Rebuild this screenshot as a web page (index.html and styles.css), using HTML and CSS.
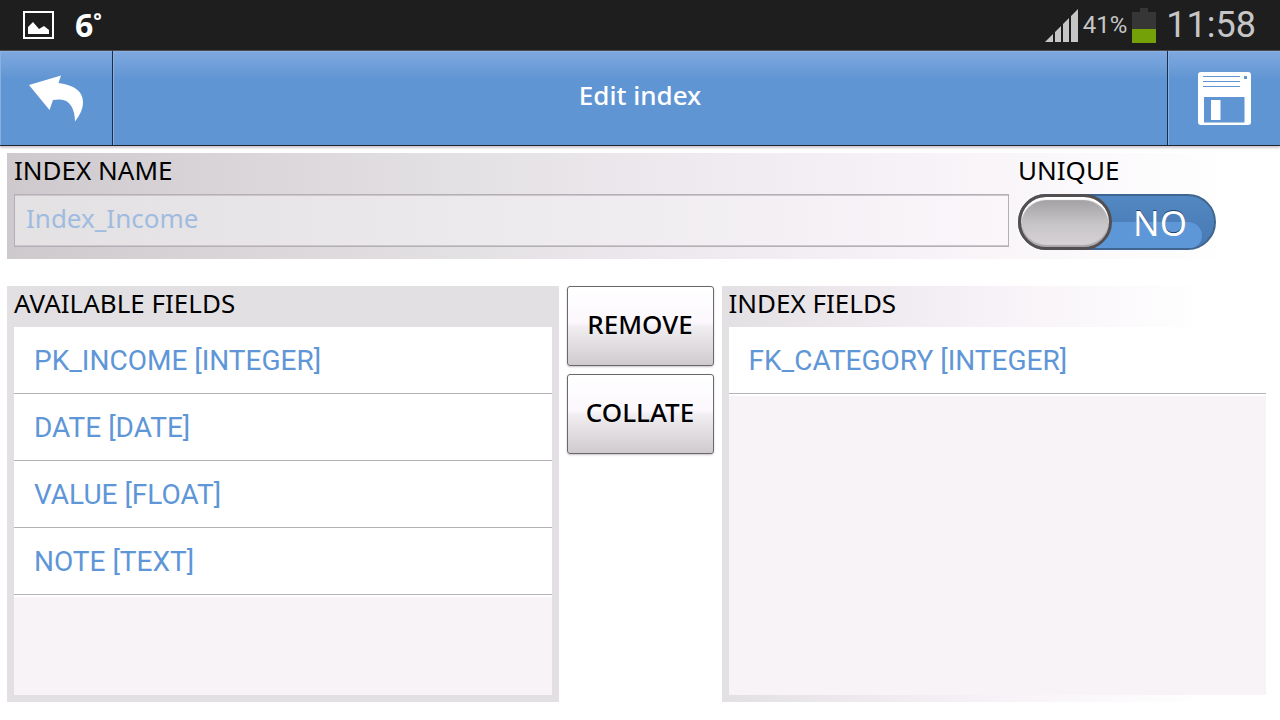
FILE: index.html
```html
<!DOCTYPE html>
<html lang="en">
<head>
<meta charset="utf-8">
<meta name="viewport" content="width=device-width, initial-scale=1">
<title>Edit index</title>
<link rel="stylesheet" href="styles.css">
</head>
<body>
<div class="status-bar">
  <div class="status-group">
    <svg class="picture-icon" width="32" height="29" viewBox="0 0 32 29" aria-hidden="true">
      <rect x="1" y="1" width="29" height="26" fill="none" stroke="#fff" stroke-width="2"/>
      <path fill="#fff" d="M5 23V16L10 11l6 7 5-3 5 4v4z"/>
    </svg>
    <span class="temperature">6<span class="degree">°</span></span>
  </div>
  <div class="status-group status-right">
    <svg width="33" height="33" viewBox="0 0 33 33" fill="#c6c6c6" aria-hidden="true">
      <path d="M0 33L8 25v8zM10 33V23l6-6v16zM18 33V15l6-6v24zM26 33V7l7-7v33z"/>
    </svg>
    <span class="percent">41%</span>
    <svg width="24" height="35" viewBox="0 0 24 35" aria-hidden="true">
      <path fill="#363636" d="M8 0h8v4h8v17H0V4h8z"/>
      <path fill="#74a008" d="M0 21h24v14H0z"/>
    </svg>
    <time class="clock">11:58</time>
  </div>
</div>
<header class="toolbar">
  <button class="tool-button" type="button" aria-label="Back">
    <svg width="55" height="47" viewBox="0 0 55 47" aria-hidden="true">
      <path fill="#fff" d="M0 10L32 0.500 29.500 8C46 10 54 17 54 27c0 7-3 13-8 19.500C46 33 40 24 30 24.500l-6 .5-3.500 10z"/>
    </svg>
  </button>
  <h1 class="title">Edit index</h1>
  <button class="tool-button" type="button" aria-label="Save">
    <svg width="53" height="53" viewBox="0 0 53 53" aria-hidden="true">
      <rect width="53" height="53" rx="3" fill="#fff"/>
      <path stroke="#6095d3" d="M5 4.500h37M5 9.500h37M5 14.500h37"/>
      <path fill="#6095d3" d="M46 4h3v3h-3zM6 25h40.500v25.500H6z"/>
      <path fill="#fff" d="M13 28h9.500v20H13z"/>
    </svg>
  </button>
</header>
<main class="content">
  <section class="panel name-panel">
    <div class="name-field">
      <label class="caption" for="index-name">INDEX NAME</label>
      <input class="text-input" id="index-name" type="text" placeholder="Index_Income">
    </div>
    <div class="unique-field">
      <label class="caption" for="unique">UNIQUE</label>
      <label class="toggle">
        <input class="toggle-input" id="unique" type="checkbox">
        <span class="toggle-knob"></span>
        <span class="toggle-text">NO</span>
      </label>
    </div>
  </section>
  <div class="columns">
    <section class="panel available-panel">
      <h2 class="caption">AVAILABLE FIELDS</h2>
      <ul class="list">
        <li class="list-item">PK_INCOME [INTEGER]</li>
        <li class="list-item">DATE [DATE]</li>
        <li class="list-item">VALUE [FLOAT]</li>
        <li class="list-item">NOTE [TEXT]</li>
      </ul>
    </section>
    <div class="actions">
      <button class="action" type="button">REMOVE</button>
      <button class="action" type="button">COLLATE</button>
    </div>
    <section class="panel index-panel">
      <h2 class="caption">INDEX FIELDS</h2>
      <ul class="list">
        <li class="list-item">FK_CATEGORY [INTEGER]</li>
      </ul>
    </section>
  </div>
</main>
</body>
</html>
```

FILE: styles.css
```css
* {
  box-sizing: border-box;
}

body {
  display: flex;
  flex-direction: column;
  min-height: 100vh;
  margin: 0;
  background: #fff;
  color: #000;
  font-family: "Noto Sans", sans-serif;
}

button {
  padding: 0;
  font: inherit;
  cursor: pointer;
}

.status-bar {
  display: flex;
  justify-content: space-between;
  height: 50px;
  padding: 0 24px 0 23px;
  background: #1e1e1e;
  color: #c6c6c6;
  font-family: Roboto, sans-serif;
}

.status-group {
  display: flex;
  align-items: center;
  gap: 20px;
}

.status-right {
  gap: 5px;
}

.temperature {
  display: flex;
  color: #fff;
  font: 700 32px/52px "Noto Sans", sans-serif;
}

.degree {
  font-size: 20px;
  line-height: 44px;
}

.percent {
  font-size: 24px;
}

.clock {
  margin-left: 5px;
  font-size: 36px;
  line-height: 50px;
}

.toolbar {
  display: flex;
  height: 96px;
  border-top: 1px solid #4b4b4f;
  border-bottom: 1px solid #20242e;
  background: linear-gradient(#80a9df, #6095d3 30%, #6095d3);
  box-shadow: 0 2px 2px #cfc9cf;
}

.tool-button {
  display: grid;
  place-items: center;
  flex: 0 0 112px;
  border: 0;
  background: none;
  box-shadow: inset 1px 1px #8ab0e2;
}

.title {
  flex: 1;
  margin: 0;
  border: solid #1c2d45;
  border-width: 0 1px;
  box-shadow: inset 1px 1px #8ab0e2;
  color: #fff;
  font-size: 26px;
  font-weight: 500;
  line-height: 88px;
  text-align: center;
}

.content {
  display: flex;
  flex: 1;
  flex-direction: column;
  gap: 27px;
  padding: 7px 7px 18px;
}

.panel {
  padding: 0 7px;
}

.name-panel {
  display: flex;
  gap: 9px;
  height: 106px;
  background: linear-gradient(90deg, #cec9cd, #e4e1e5 36%, #f7f2f7 72%, #fff 97%);
}

.name-field {
  display: flex;
  flex: 1;
  flex-direction: column;
}

.unique-field {
  display: flex;
  flex: 0 0 248px;
  flex-direction: column;
  align-items: flex-start;
}

.caption {
  display: block;
  height: 41px;
  margin: 0;
  font-size: 26px;
  font-weight: 400;
  line-height: 34px;
}

.text-input {
  width: 100%;
  height: 53px;
  padding: 0 11px 5px;
  border: 1px solid #b3afb4;
  box-shadow: inset 0 1px #cbc7cc, inset 0 -1px #cbc7cc;
  background: linear-gradient(90deg, rgb(255 255 255 / 45%), rgb(255 255 255 / 10%));
  color: #6095d3;
  font: 26px "Noto Sans", sans-serif;
}

.text-input::placeholder {
  color: #9fbce0;
  opacity: 1;
}

.toggle {
  position: relative;
  display: flex;
  align-items: center;
  width: 198px;
  height: 56px;
  border: 2px solid #3f6690;
  border-radius: 28px;
  background: linear-gradient(#5288c3, #4878b1);
  cursor: pointer;
}

.toggle::before {
  position: absolute;
  inset: 26px 12px 0 40px;
  border-radius: 0 14px 12px 0;
  background: #5e97d8;
  content: "";
}

.toggle-input {
  width: 0;
  height: 0;
  margin: 0;
  appearance: none;
}

.toggle-knob {
  position: relative;
  width: 94px;
  height: 56px;
  margin-left: -2px;
  border: 3px solid #534f51;
  border-radius: 28px;
  background: linear-gradient(#a09da0, #c8c5c8 55%, #d7d3d7);
  box-shadow: inset 0 3px 1px #fff, inset 0 -2px 1px #aaa7aa;
}

.toggle-text {
  position: relative;
  flex: 1;
  padding-right: 6px;
  color: #fff;
  font: 35px "Noto Sans", sans-serif;
  text-align: center;
  text-shadow: 0 -1px #1d3f69;
}

.columns {
  display: grid;
  flex: 1;
  grid-template-columns: 1fr 147px 1fr;
  gap: 8px;
}

.available-panel,
.index-panel {
  display: flex;
  flex-direction: column;
  padding-bottom: 7px;
}

.available-panel {
  background: #e3e0e4;
}

.index-panel {
  background: linear-gradient(90deg, #e3e0e4, #f7f2f7 50%, #fff 88%);
}

.list {
  flex: 1;
  margin: 0;
  padding: 0;
  background: #f7f3f7;
  list-style: none;
}

.list-item {
  height: 67px;
  padding-left: 20px;
  border-bottom: 1px solid #b5b1b5;
  background: #fff;
  color: #5e96d7;
  font: 28px/68px Roboto, sans-serif;
}

.list-item:last-child {
  box-shadow: 0 2px #fff;
}

.actions {
  display: flex;
  flex-direction: column;
  gap: 8px;
}

.action {
  height: 80px;
  padding-bottom: 4px;
  border: 1px solid #6b686b;
  border-radius: 3px;
  background: linear-gradient(#fff, #fcf8fd 45%, #f0edf1 52%, #cfcace);
  box-shadow: 0 1px 2px #c8c4c8;
  color: #000;
  font-size: 26px;
  font-weight: 500;
}
```
